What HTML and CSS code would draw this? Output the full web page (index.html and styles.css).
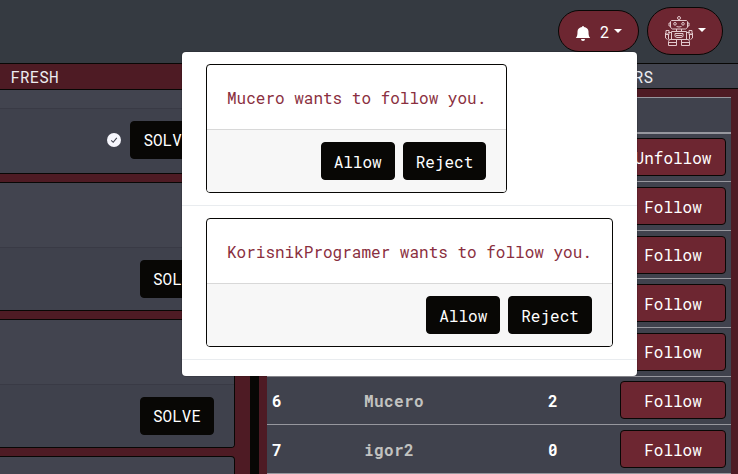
FILE: index.html
```html
<!DOCTYPE html>
<html lang="en">
<head>
<meta charset="utf-8">
<title>Followers</title>
<link rel="stylesheet" href="styles.css">
</head>
<body>
<header class="topbar">
  <button class="pill pill-bell">
    <svg class="bell" width="16" height="16" viewBox="0 0 16 16"><path fill="currentColor" d="M8 16a2 2 0 0 0 2-2H6a2 2 0 0 0 2 2zM9 2a1 1 0 0 0-2 0C4.500 2.300 2.500 4 2.500 6.500c0 3-.2 5-1.700 6.500h14.400C13.700 11.500 13.500 9.500 13.500 6.500 13.500 4 11.500 2.300 9 2z"/></svg>
    <span class="count">2</span><span class="caret"></span>
  </button>
  <button class="pill pill-robot">
    <svg class="robot" width="30" height="32" viewBox="0 0 30 32" fill="none" stroke="currentColor">
      <circle cx="15" cy="3" r="1.500"/>
      <path d="M12.500 5.500h5M7.500 5.500h15l1 1v6l-2 1.500h-13l-2-1.500v-6zM6.500 8h-1.500v3h1.500M23.500 8h1.500v3h-1.500M12.500 11.500q2.500 1 5 0M12.500 14v2M17.500 14v2"/>
      <circle cx="11" cy="8.800" r="1.300"/><circle cx="19" cy="8.800" r="1.300"/>
      <path d="M7.500 16.500h15v8h-15zM11 18.500h8v3l-2 1h-4l-2-1zM12 20.500h6M7.500 17.500h-3l-1 1M22.500 17.500h3l1 1M2 15.500h3v4h-3zM25 15.500h3v4h-3zM1.500 18v5l2 1.500M28.500 18v5l-2 1.500M4.500 19.500v5M25.500 19.500v5M5.500 24.500h7v6h-8v-4zM24.500 24.500h-7v6h8v-4zM4.500 27.500h8M17.500 27.500h8"/>
    </svg>
    <span class="caret"></span>
  </button>

  <div class="menu">
    <div class="item">
      <div class="notice">
        <p class="notice-body">Mucero wants to follow you.</p>
        <div class="notice-foot"><button class="btn">Allow</button><button class="btn">Reject</button></div>
      </div>
    </div>
    <hr class="divider">
    <div class="item">
      <div class="notice">
        <p class="notice-body">KorisnikProgramer wants to follow you.</p>
        <div class="notice-foot"><button class="btn">Allow</button><button class="btn">Reject</button></div>
      </div>
    </div>
    <hr class="divider">
  </div>
</header>

<main class="columns">
  <section class="tasks">
    <h2 class="tab tab-active">FRESH</h2>
    <div class="cards">
      <article class="card card-cut">
        <div class="card-body"></div>
        <div class="card-foot">
          <svg class="check" width="14" height="14" viewBox="0 0 14 14"><circle cx="7" cy="7" r="7" fill="#f6f6fc"/><path d="M4.200 7.300l2 2 3.600-4.500" fill="none" stroke="#42444f" stroke-width="1.100"/></svg>
          <button class="btn">SOLVED</button>
        </div>
      </article>
      <article class="card"><div class="card-body"></div><div class="card-foot"><button class="btn">SOLVE</button></div></article>
      <article class="card"><div class="card-body"></div><div class="card-foot"><button class="btn">SOLVE</button></div></article>
      <article class="card"><div class="card-body"></div><div class="card-foot"></div></article>
    </div>
  </section>
  <section class="users">
    <h2 class="tab tab-users">USERS</h2>
    <div class="table">
      <div class="thead"></div>
      <div class="row"><b></b><b></b><b></b><button class="follow">Unfollow</button></div>
      <div class="row"><b></b><b></b><b></b><button class="follow">Follow</button></div>
      <div class="row"><b></b><b></b><b></b><button class="follow">Follow</button></div>
      <div class="row"><b></b><b></b><b></b><button class="follow">Follow</button></div>
      <div class="row"><b></b><b></b><b></b><button class="follow">Follow</button></div>
      <div class="row"><b>6</b><b class="name">Mucero</b><b>2</b><button class="follow">Follow</button></div>
      <div class="row"><b>7</b><b class="name">igor2</b><b>0</b><button class="follow">Follow</button></div>
    </div>
  </section>
</main>
</body>
</html>
```
FILE: styles.css
```css
* { box-sizing: border-box; }

body {
  margin: 0;
  height: 474px;
  overflow: hidden;
  display: flex;
  flex-direction: column;
  background: #4e1b24;
  color: #fff;
  font: 16px/24px "Roboto Mono", "DejaVu Sans Mono", monospace;
}

button {
  font: inherit;
  color: #fff;
  margin: 0;
}

.topbar {
  position: relative;
  z-index: 2;
  flex: none;
  height: 63px;
  padding: 7px 15px 0 0;
  display: flex;
  justify-content: flex-end;
  align-items: flex-start;
  gap: 8px;
  background: #353a41;
}

.pill {
  display: flex;
  align-items: center;
  background: #6d2631;
  border: 1px solid #080705;
}

.pill-bell {
  width: 81px;
  height: 42px;
  margin-top: 3px;
  padding: 2px 0 0 16px;
  border-radius: 21px;
}

.pill-robot {
  width: 76px;
  height: 48px;
  padding: 0 0 0 16px;
  border-radius: 24px;
}

.bell { margin-top: 1px; }
.count { margin-left: 9px; }

.caret {
  margin-left: 4px;
  border: 4.500px solid transparent;
  border-top-color: #fff;
  border-bottom: 0;
  margin-bottom: 3px;
}

.robot {
  color: #e3c9cd;
  stroke-width: 1;
}

.menu {
  position: absolute;
  top: 52px;
  left: 182px;
  width: 455px;
  height: 324px;
  padding: 8px 0;
  background: #fff;
  border-radius: 4px;
  box-shadow: 0 0 0 1px rgba(0, 0, 0, 0.12);
}

.item {
  padding: 4px 24px;
  display: flex;
}

.notice {
  height: 129px;
  border: 1px solid #080705;
  border-radius: 4px;
  overflow: hidden;
  color: #8a2f40;
}

.notice-body {
  margin: 0;
  padding: 21px 20px 19px;
  white-space: nowrap;
}

.notice-foot {
  height: 63px;
  padding: 12px 20px;
  border-top: 1px solid #d8d8d8;
  background: #f7f7f7;
  display: flex;
  justify-content: flex-end;
  gap: 8px;
}

.notice-foot .btn { padding-top: 2px; }

.divider {
  margin: 8px 0;
  border: 0;
  height: 1px;
  background: #e9ecef;
}

.btn {
  height: 38px;
  padding: 0 12px;
  border: 1px solid #080705;
  border-radius: 4px;
  background: #080705;
}

.columns {
  flex: none;
  height: 411px;
  display: flex;
}

.tasks {
  width: 259px;
  border-right: 9px solid #080705;
}

.tab {
  margin: 0;
  border: solid #080705;
  border-width: 1px 0;
  font-size: 16px;
  font-weight: 400;
  color: #ececf0;
}

.tab-active {
  height: 27px;
  padding: 1px 10.500px 0;
}

.cards {
  height: 384px;
  width: 235px;
  overflow: hidden;
  display: flex;
  flex-direction: column;
  gap: 8px;
}

.card {
  flex: none;
  height: 129px;
  border: 1px solid #080705;
  border-left: 0;
  border-radius: 0 4px 4px 0;
  background: #42444f;
  overflow: hidden;
}

.card-body { height: 64px; }

.card-foot {
  height: 63px;
  padding: 12px 20px;
  border-top: 1px solid #393a45;
  background: #3f414c;
  display: flex;
  justify-content: flex-end;
  align-items: center;
}

.card-cut {
  height: 84px;
  border-top: 0;
  border-top-right-radius: 0;
}

.card-cut .card-body { height: 18px; }

.card-cut .card-foot {
  height: 65px;
  padding-bottom: 14px;
}

.check { margin-right: 9px; }

.users { flex: 1; }

.tab-users {
  height: 26px;
  padding: 1px 85px 0 0;
  background: #42444f;
  text-align: right;
}

.table {
  margin: 8px 7px 0 8px;
  background: #40424d;
  border-top: 1px solid #97979e;
}

.thead {
  height: 35.700px;
  border-bottom: 2px solid #97979e;
}

.row {
  height: 48.600px;
  padding: 0 5px;
  display: grid;
  grid-template-columns: 92px 184px 72px 106px;
  align-items: center;
  border-bottom: 1px solid #97979e;
}

.row b { padding-top: 1px; }

.name {
  color: #c2c2c0;
  letter-spacing: 0.400px;
}

.follow {
  height: 38px;
  padding: 1px 0 0;
  border: 1px solid #080705;
  border-radius: 4px;
  background: #6d2631;
}
```
